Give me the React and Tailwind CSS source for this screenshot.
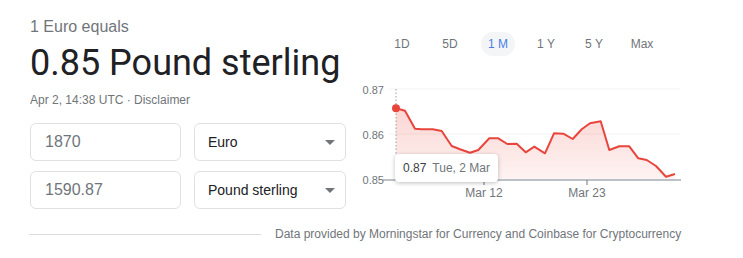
import React from "react";

const points = [
	[40, 28.3], [49, 30.7], [59, 48.7], [65.7, 49.3], [76.7, 49.3], [85.7, 51],
	[95.7, 66], [104, 69.3], [114, 72.7], [122.3, 70], [133.3, 58.3], [142.3, 58.3],
	[151.3, 64], [160.7, 63.7], [169.7, 72.3], [178.3, 66.7], [189, 73.3], [198, 53.3],
	[207.3, 53.7], [216.7, 59], [225.7, 49.3], [234, 43.3], [244.7, 41.3], [253.3, 70],
	[263.3, 66.3], [273.3, 66.3], [282.3, 78.3], [290.7, 80], [300, 86], [310, 96.7],
	[319, 94],
];

const tabs = ["1D", "5D", "1 M", "1 Y", "5 Y", "Max"];

function CurrencyRow({ value, currency }) {
	return (
		<div className="flex">
			<div className="w-[151px] h-[38px] rounded-[6px] border border-[#dfe1e5] flex items-center pl-[14px] text-[16px] text-[#70757a]">
				{value}
			</div>
			<div className="ml-[13px] w-[152px] h-[38px] rounded-[6px] border border-[#dfe1e5] flex items-center justify-between pl-[13px] pr-[10px] text-[14px] text-[#202124]">
				<span>{currency}</span>
				<svg width="10" height="5" viewBox="0 0 10 5">
					<path d="M0 0 L10 0 L5 5 Z" fill="#70757a" />
				</svg>
			</div>
		</div>
	);
}

function Chart() {
	const line = points.map(([x, y], i) => `${i ? "L" : "M"}${x} ${y}`).join(" ");
	const area = `${line} L319 100 L40 100 Z`;

	return (
		<svg width="387" height="122" viewBox="0 0 387 122" className="block">
			<defs>
				<linearGradient id="fill" x1="0" y1="0" x2="0" y2="1">
					<stop offset="0%" stopColor="#ea4335" stopOpacity="0.22" />
					<stop offset="100%" stopColor="#ea4335" stopOpacity="0.06" />
				</linearGradient>
			</defs>
			<line x1="33" y1="9" x2="324" y2="9" stroke="#f3f3f3" strokeWidth="1" />
			<line x1="33" y1="54" x2="324" y2="54" stroke="#f3f3f3" strokeWidth="1" />
			<path d={area} fill="url(#fill)" />
			<line x1="40" y1="9" x2="40" y2="74" stroke="#9aa0a6" strokeWidth="1" strokeDasharray="1.5 2" />
			<path d={line} fill="none" stroke="#e8453c" strokeWidth="2" strokeLinejoin="round" />
			<line x1="27" y1="100" x2="325" y2="100" stroke="#bdc1c6" strokeWidth="2" />
			<line x1="128" y1="100" x2="128" y2="105" stroke="#70757a" strokeWidth="1" />
			<line x1="231" y1="100" x2="231" y2="105" stroke="#70757a" strokeWidth="1" />
			<circle cx="40" cy="28.3" r="4" fill="#e8453c" />
			<g fontFamily="'Liberation Sans', Arial, sans-serif" fontSize="11" fill="#70757a">
				<text x="28" y="14" textAnchor="end">0.87</text>
				<text x="28" y="59" textAnchor="end">0.86</text>
				<text x="28" y="104" textAnchor="end">0.85</text>
				<text x="128" y="117" textAnchor="middle" fontSize="12">Mar 12</text>
				<text x="231" y="117" textAnchor="middle" fontSize="12">Mar 23</text>
			</g>
		</svg>
	);
}

export default function App() {
	return (
		<div className="w-[743px] h-[258px] bg-white overflow-hidden font-['Liberation_Sans',Arial,sans-serif]">
			<div className="flex">
				{/* left: conversion */}
				<div className="w-[356px] pl-[30px] pt-[17px]">
					<div className="text-[16px] leading-[20px] text-[#70757a]">1 Euro equals</div>
					<div className="mt-[4px] text-[36px] leading-[44px] text-[#202124] font-['Roboto',sans-serif]">
						0.85 Pound sterling
					</div>
					<div className="mt-[7px] text-[12px] leading-[16px] text-[#70757a]">
						Apr 2, 14:38 UTC · Disclaimer
					</div>
					<div className="mt-[15px] flex flex-col gap-[10px]">
						<CurrencyRow value="1870" currency="Euro" />
						<CurrencyRow value="1590.87" currency="Pound sterling" />
					</div>
				</div>

				{/* right: chart */}
				<div className="relative w-[387px] pt-[32px]">
					<div className="flex ml-[22px]">
						{tabs.map((t) => (
							<div key={t} className="w-[48px] h-[24px] flex items-center justify-center text-[12px]">
								{t === "1 M" ? (
									<span className="h-[24px] px-[7px] rounded-full bg-[#f4f5f7] text-[#4a7fe6] flex items-center">
										{t}
									</span>
								) : (
									<span className="text-[#70757a]">{t}</span>
								)}
							</div>
						))}
					</div>
					<div className="mt-[24px]">
						<Chart />
					</div>
					<div className="absolute left-[39px] top-[154px] w-[103px] h-[28px] bg-white rounded-[4px] shadow-[0_1px_4px_rgba(0,0,0,0.25)] flex items-center pl-[8px] text-[12px]">
						<span className="text-[#3c4043]">0.87</span>
						<span className="ml-[6px] text-[#70757a]">Tue, 2 Mar</span>
					</div>
				</div>
			</div>

			{/* footer */}
			<div className="mt-[17px] flex items-center pl-[29px]">
				<div className="w-[232px] h-px bg-[#dadce0]" />
				<div className="ml-[14px] text-[12px] leading-[16px] text-[#70757a]">
					Data provided by Morningstar for Currency and Coinbase for Cryptocurrency
				</div>
			</div>
		</div>
	);
}
